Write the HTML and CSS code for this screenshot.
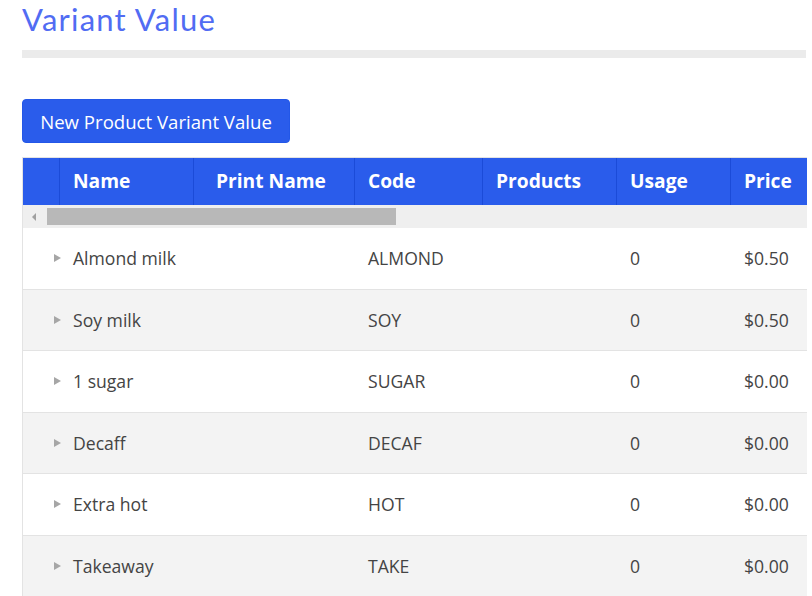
FILE: index.html
```html
<!DOCTYPE html>
<html>
<head>
<meta charset="utf-8">
<link rel="stylesheet" href="styles.css">
</head>
<body>
<div class="page">
  <h1 class="title">Variant Value</h1>
  <div class="divider"></div>
  <button class="btn">New Product Variant Value</button>
  <div class="grid">
    <div class="head">
      <div class="hc c0"></div>
      <div class="hc c1">Name</div>
      <div class="hc c2 wide">Print Name</div>
      <div class="hc c3">Code</div>
      <div class="hc c4">Products</div>
      <div class="hc c5">Usage</div>
      <div class="hc c6">Price</div>
    </div>
    <div class="scroll">
      <span class="arrow"></span>
      <span class="thumb"></span>
    </div>
    <div class="row">
      <div class="dc c0"></div>
      <div class="dc c1"><span class="tri"></span>Almond milk</div>
      <div class="dc c2"></div>
      <div class="dc c3">ALMOND</div>
      <div class="dc c4"></div>
      <div class="dc c5">0</div>
      <div class="dc c6">$0.50</div>
    </div>
    <div class="row alt">
      <div class="dc c0"></div>
      <div class="dc c1"><span class="tri"></span>Soy milk</div>
      <div class="dc c2"></div>
      <div class="dc c3">SOY</div>
      <div class="dc c4"></div>
      <div class="dc c5">0</div>
      <div class="dc c6">$0.50</div>
    </div>
    <div class="row">
      <div class="dc c0"></div>
      <div class="dc c1"><span class="tri"></span>1 sugar</div>
      <div class="dc c2"></div>
      <div class="dc c3">SUGAR</div>
      <div class="dc c4"></div>
      <div class="dc c5">0</div>
      <div class="dc c6">$0.00</div>
    </div>
    <div class="row alt">
      <div class="dc c0"></div>
      <div class="dc c1"><span class="tri"></span>Decaff</div>
      <div class="dc c2"></div>
      <div class="dc c3">DECAF</div>
      <div class="dc c4"></div>
      <div class="dc c5">0</div>
      <div class="dc c6">$0.00</div>
    </div>
    <div class="row">
      <div class="dc c0"></div>
      <div class="dc c1"><span class="tri"></span>Extra hot</div>
      <div class="dc c2"></div>
      <div class="dc c3">HOT</div>
      <div class="dc c4"></div>
      <div class="dc c5">0</div>
      <div class="dc c6">$0.00</div>
    </div>
    <div class="row alt">
      <div class="dc c0"></div>
      <div class="dc c1"><span class="tri"></span>Takeaway</div>
      <div class="dc c2"></div>
      <div class="dc c3">TAKE</div>
      <div class="dc c4"></div>
      <div class="dc c5">0</div>
      <div class="dc c6">$0.00</div>
    </div>
  </div>
</div>
</body>
</html>
```
FILE: styles.css
```css
html, body {
  margin: 0;
  padding: 0;
  background: #ffffff;
  overflow: hidden;
}
.page {
  padding-left: 22px;
  width: 790px;
  font-family: "Open Sans", "Liberation Sans", sans-serif;
}
.title {
  margin: 0;
  padding-top: 0;
  font-family: "Lato", "Open Sans", sans-serif;
  font-weight: 400;
  font-size: 31px;
  line-height: 38px;
  color: #516cf3;
  letter-spacing: 1.2px;
}
.divider {
  margin-top: 12px;
  width: 784px;
  height: 8px;
  background: #ebebeb;
}
.btn {
  display: block;
  margin-top: 41px;
  height: 44px;
  width: 268px;
  padding: 0;
  border: 1px solid #2357e8;
  border-radius: 4px;
  background: #2a5ceb;
  color: #ffffff;
  font-family: "Open Sans", "Liberation Sans", sans-serif;
  font-size: 18.6px;
  text-align: center;
}
.grid {
  margin-top: 14px;
  border-left: 1px solid #e3e3e3;
  border-top: 1px solid #e3e3e3;
  width: 784px;
  overflow: hidden;
}
.head {
  display: flex;
  height: 47px;
  background: #2a5ceb;
}
.hc {
  box-sizing: border-box;
  border-right: 1px solid #1b4bd8;
  color: #ffffff;
  font-weight: 700;
  font-size: 19.2px;
  line-height: 46px;
  padding-left: 13px;
  white-space: nowrap;
}
.hc.wide { padding-left: 22px; }
.c0 { width: 37px; flex: none; padding-left: 0; }
.c1 { width: 134px; flex: none; }
.c2 { width: 161px; flex: none; }
.c3 { width: 128px; flex: none; }
.c4 { width: 134px; flex: none; }
.c5 { width: 114px; flex: none; }
.c6 { width: 75px; flex: none; border-right: none; }
.scroll {
  position: relative;
  height: 23px;
  background: #efefef;
}
.arrow {
  position: absolute;
  left: 9px;
  top: 8px;
  width: 0;
  height: 0;
  border-top: 4px solid transparent;
  border-bottom: 4px solid transparent;
  border-right: 4px solid #a0a0a0;
}
.thumb {
  position: absolute;
  left: 24px;
  top: 3px;
  width: 349px;
  height: 17px;
  background: #b8b8b8;
}
.row {
  display: flex;
  height: 60.5px;
  border-bottom: 1px solid #e3e3e3;
  background: #ffffff;
}
.row.alt {
  background: #f3f3f3;
}
.dc {
  box-sizing: border-box;
  color: #444444;
  font-size: 17.6px;
  line-height: 60px;
  padding-left: 13px;
  white-space: nowrap;
}
.dc.c1 {
  position: relative;
  padding-left: 13px;
}
.tri {
  position: absolute;
  left: -6px;
  top: 26px;
  width: 0;
  height: 0;
  border-top: 4.5px solid transparent;
  border-bottom: 4.5px solid transparent;
  border-left: 7px solid #a6a6a6;
}
```
